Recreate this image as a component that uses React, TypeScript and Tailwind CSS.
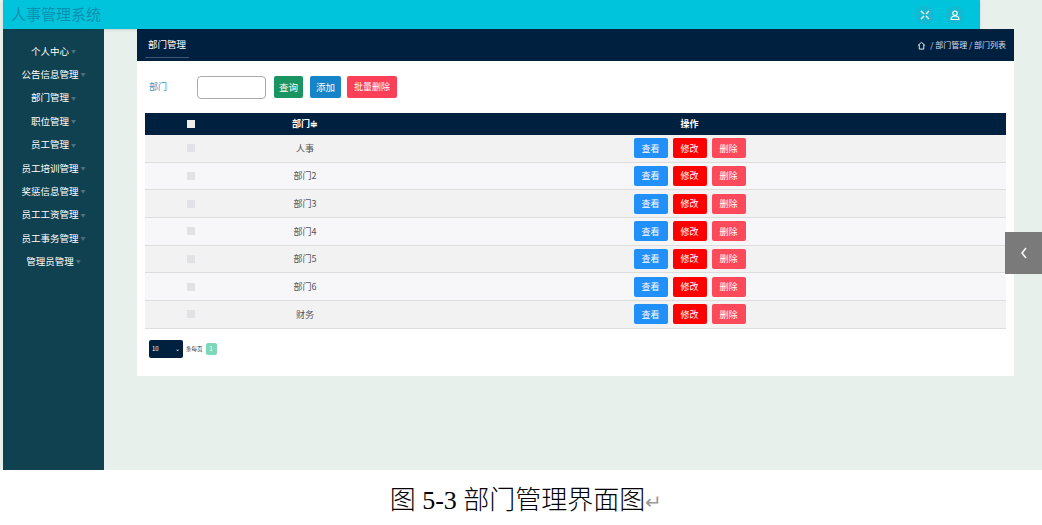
import React from "react";

const rows = ["人事", "部门2", "部门3", "部门4", "部门5", "部门6", "财务"];
const menu = ["个人中心", "公告信息管理", "部门管理", "职位管理", "员工管理", "员工培训管理", "奖惩信息管理", "员工工资管理", "员工事务管理", "管理员管理"];

export default function App() {
  return (
    <div className="w-[1042px] h-[525px] bg-white overflow-hidden" style={{ fontFamily: '"Noto Sans CJK SC", "Noto Sans", sans-serif' }}>
      <div className="h-[470px] pl-[3px] flex flex-col bg-[#e7f0eb] relative">
        <div className="h-[29px] w-[977px] bg-[#00c4dc] flex items-center justify-between px-2 shadow">
          <span className="text-[#0a8fb0] text-[15px]">人事管理系统</span>
          <div className="flex gap-3 pr-2">
            <div className="w-[18px] h-[18px] rounded-full bg-[#14b8d0] flex items-center justify-center">
              <svg width="10" height="10" viewBox="0 0 10 10" stroke="white" strokeWidth="1.3" fill="none"><path d="M1 1l3 3M9 1L6 4M1 9l3-3M9 9L6 6" /></svg>
            </div>
            <div className="w-[18px] h-[18px] rounded-full bg-[#14b8d0] flex items-center justify-center">
              <svg width="10" height="10" viewBox="0 0 10 10" stroke="white" strokeWidth="1.1" fill="none"><circle cx="5" cy="3.2" r="2.2" /><path d="M1 9.5h8c0-2.5-2-3.5-4-3.5s-4 1-4 3.5z" /></svg>
            </div>
          </div>
        </div>
        <div className="flex flex-1">
          <div className="w-[101px] bg-[#0f4150] flex flex-col items-center pt-[10px]">
            {menu.map((m) => (
              <div key={m} className="h-[23.4px] flex items-center text-white text-[9.5px]">
                {m}<span className="text-[#4d707b] text-[5px] ml-[2px]">▼</span>
              </div>
            ))}
          </div>
          <div className="flex-1 pl-[33px] pr-[28px]">
            <div className="bg-white h-[347px]">
              <div className="h-[32px] bg-[#00203f] flex items-center justify-between px-2">
                <span className="text-white text-[9.5px] border-b border-[#3a5a7a] px-[3px] pb-[5px] pt-[5px]">部门管理</span>
                <span className="text-[#dde] text-[8px] flex items-center gap-1">
                  <svg width="9" height="9" viewBox="0 0 10 10" stroke="white" fill="none"><path d="M1 5L5 1.5 9 5M2.5 4v5h5V4" /></svg>
                  / 部门管理 / 部门列表
                </span>
              </div>
              <div className="flex items-center h-[52px] px-[12px]">
                <span className="text-[#3a8fc0] text-[9px] w-[48px]">部门</span>
                <div className="w-[69px] h-[23px] border border-[#aaa] rounded-[4px] mr-[8px]" />
                <button className="h-[22px] px-[5px] bg-[#1a9460] text-white text-[9.5px] rounded-[2px] mr-[7px]">查询</button>
                <button className="h-[22px] px-[6px] bg-[#1584c8] text-white text-[9.5px] rounded-[2px] mr-[6px]">添加</button>
                <button className="h-[22px] px-[7px] bg-[#fb4058] text-white text-[9px] rounded-[2px]">批量删除</button>
              </div>
              <div className="mx-[8px]">
                <div className="h-[22px] bg-[#00203f] flex items-center text-white text-[9px] font-bold">
                  <div className="w-[92px] flex justify-center"><div className="w-[8px] h-[8px] bg-[#eee]" /></div>
                  <div className="w-[136px] text-center">部门≑</div>
                  <div className="flex-1 text-center">操作</div>
                </div>
                {rows.map((r, i) => (
                  <div key={r} className={`h-[27.7px] flex items-center border-b border-[#ddd] text-[9px] text-[#555] ${i % 2 ? "bg-[#f7f7f9]" : "bg-[#f2f2f2]"}`}>
                    <div className="w-[92px] flex justify-center"><div className="w-[8px] h-[8px] bg-[#e2e2e6]" /></div>
                    <div className="w-[136px] text-center">{r}</div>
                    <div className="flex-1 flex justify-center gap-[5px]">
                      <button className="w-[34px] h-[20px] bg-[#2190f8] text-white rounded-[2px] text-[9px]">查看</button>
                      <button className="w-[34px] h-[20px] bg-[#ff0000] text-white rounded-[2px] text-[9px]">修改</button>
                      <button className="w-[34px] h-[20px] bg-[#fc4a5a] text-white rounded-[2px] text-[9px]">删除</button>
                    </div>
                  </div>
                ))}
                <div className="flex items-center gap-[3px] mt-[11px] ml-[4px]">
                  <div className="w-[34px] h-[18px] bg-[#00203f] rounded-[2px] text-white text-[6px] flex items-center justify-between px-[3px]"><span>10</span><span>⌄</span></div>
                  <span className="text-[5.5px] text-[#333]">条每页</span>
                  <div className="w-[11px] h-[12px] bg-[#7dd8b8] rounded-[2px] text-white text-[6px] flex items-center justify-center">1</div>
                </div>
              </div>
            </div>
          </div>
        </div>
        <div className="absolute right-0 top-[232px] w-[37px] h-[42px] bg-[#7a7a7a] flex items-center justify-center">
          <svg width="10" height="14" viewBox="0 0 10 14" stroke="white" strokeWidth="1.5" fill="none"><path d="M7 2L3 7l4 5" /></svg>
        </div>
      </div>
      <div className="flex justify-center pt-[18px] text-[26px] leading-none text-black font-light" style={{ fontFamily: '"Liberation Serif", "Noto Sans CJK SC", serif' }}>
        <span className="ml-[10px]">图 5-3 部门管理界面图<span className="text-[#999] text-[20px]">↵</span></span>
      </div>
    </div>
  );
}
